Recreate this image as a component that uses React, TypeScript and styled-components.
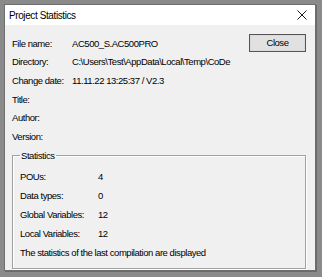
import styled, { createGlobalStyle } from "styled-components";

const Global = createGlobalStyle`
  html, body {
    margin: 0;
    padding: 0;
    background: #8a8a8a;
  }
  body {
    font-family: "Liberation Sans", Arial, sans-serif;
  }
`;

const info = [
  { label: "File name:", value: "AC500_S.AC500PRO" },
  { label: "Directory:", value: "C:\\Users\\Test\\AppData\\Local\\Temp\\CoDe" },
  { label: "Change date:", value: "11.11.22 13:25:37 / V2.3" },
  { label: "Title:", value: "" },
  { label: "Author:", value: "" },
  { label: "Version:", value: "" },
];

const stats = [
  { label: "POUs:", value: "4" },
  { label: "Data types:", value: "0" },
  { label: "Global Variables:", value: "12" },
  { label: "Local Variables:", value: "12" },
];

export default function App() {
  return (
    <Page>
      <Global />
      <Window>
        <TitleBar>
          <Title>Project Statistics</Title>
          <CloseX width="10" height="10" viewBox="0 0 10 10">
            <path d="M0.5 0.5 L9.5 9.5 M9.5 0.5 L0.5 9.5" stroke="#1a1a1a" strokeWidth="1" />
          </CloseX>
        </TitleBar>
        <Body>
          <TopRow>
            <InfoGrid>
              {info.map((r) => (
                <Row key={r.label}>
                  <Label>{r.label}</Label>
                  <Value>{r.value}</Value>
                </Row>
              ))}
            </InfoGrid>
            <Button>Close</Button>
          </TopRow>
          <GroupBox>
            <Legend>Statistics</Legend>
            <StatsGrid>
              {stats.map((r) => (
                <StatRow key={r.label}>
                  <Label>{r.label}</Label>
                  <Value>{r.value}</Value>
                </StatRow>
              ))}
              <Note>The statistics of the last compilation are displayed</Note>
            </StatsGrid>
          </GroupBox>
        </Body>
      </Window>
    </Page>
  );
}

const Page = styled.div`
  width: 322px;
  height: 277px;
  padding: 4px;
  box-sizing: border-box;
`;

const Window = styled.div`
  width: 312px;
  height: 267px;
  box-sizing: border-box;
  border: 1px solid #6e6e6e;
  background: #f0f0f0;
  box-shadow: 1px 1px 0 #6a6a6a;
  display: flex;
  flex-direction: column;
`;

const TitleBar = styled.div`
  height: 20px;
  background: #ffffff;
  display: flex;
  align-items: center;
  justify-content: space-between;
  padding: 0 8px 0 4px;
`;

const Title = styled.span`
  font-size: 10px;
  letter-spacing: -0.4px;
  color: #000;
`;

const CloseX = styled.svg`
  display: block;
  width: 10px;
  height: 10px;
`;

const Body = styled.div`
  flex: 1;
  padding: 9px 9px 0 7px;
  font-size: 9.5px;
  letter-spacing: -0.45px;
  color: #000;
`;

const TopRow = styled.div`
  display: flex;
  align-items: flex-start;
  gap: 8px;
`;

const InfoGrid = styled.div`
  width: 229px;
  display: grid;
  grid-auto-rows: 18.6px;
`;

const Row = styled.div`
  display: grid;
  grid-template-columns: 60px 169px;
  align-items: center;
`;

const Label = styled.span`
  white-space: nowrap;
`;

const Value = styled.span`
  white-space: nowrap;
`;

const Button = styled.button`
  width: 58px;
  height: 18px;
  margin-top: -0.5px;
  box-sizing: border-box;
  border: 1px solid #555;
  box-shadow: inset 0 0 0 1px #d9d9d9;
  background: #e1e1e1;
  font-family: inherit;
  font-size: 9.5px;
  letter-spacing: -0.45px;
  color: #000;
  padding: 0;
`;

const GroupBox = styled.fieldset`
  margin: 4px 0 0 0;
  padding: 6px 7px 6px 7px;
  border: 1px solid #a0a0a0;
  box-shadow: 1px 1px 0 #fff, inset 1px 1px 0 #fff;
`;

const Legend = styled.legend`
  padding: 0 1px;
  margin-left: 0;
  font-size: 9.5px;
  line-height: 11px;
`;

const StatsGrid = styled.div`
  display: grid;
  grid-auto-rows: 19px;
`;

const StatRow = styled.div`
  display: grid;
  grid-template-columns: 78px 1fr;
  align-items: center;
`;

const Note = styled.div`
  display: flex;
  align-items: center;
  white-space: nowrap;
`;
